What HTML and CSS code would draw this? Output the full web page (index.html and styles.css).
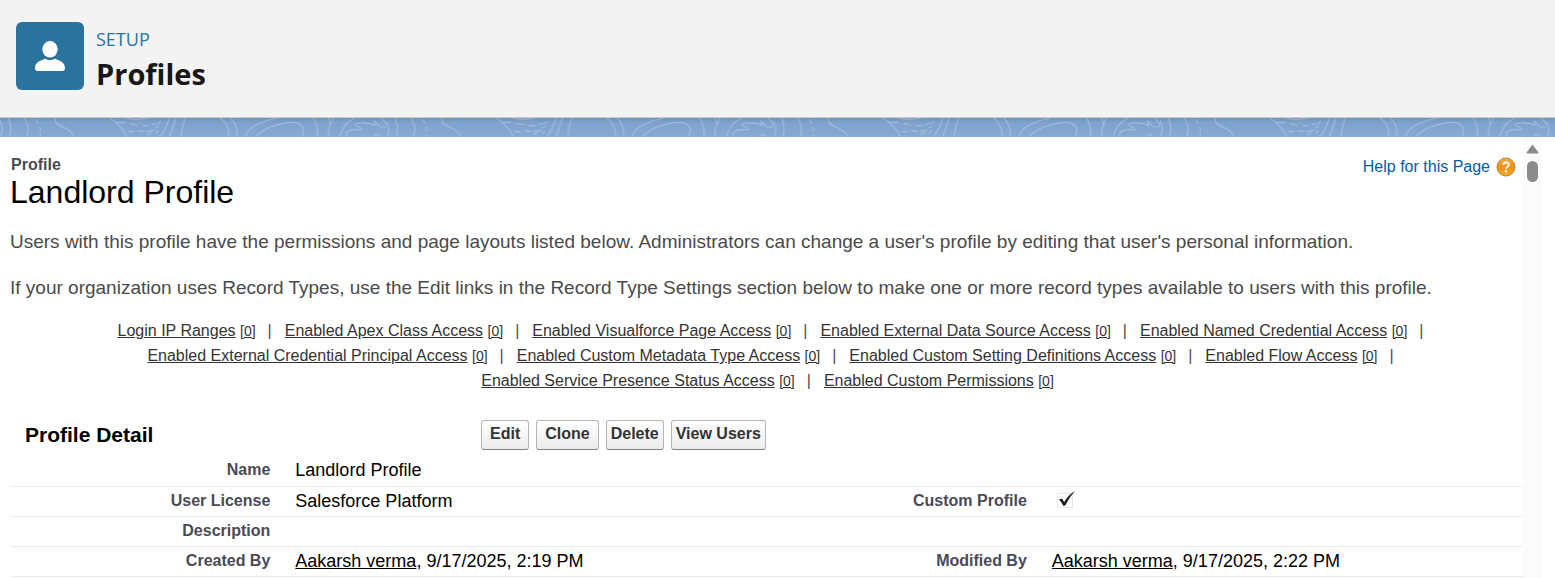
FILE: index.html
```
<!DOCTYPE html>
<html lang="en">
<head>
<meta charset="utf-8">
<title>Profiles</title>
<link rel="stylesheet" href="styles.css">
</head>
<body>
<header class="setup-header">
  <span class="setup-icon">
    <svg width="32" height="32" viewBox="0 0 32 32" aria-hidden="true">
      <ellipse cx="16" cy="9.300" rx="7.700" ry="8.300"/>
      <path d="M10 19.200C11.200 18.200 12 19 12.800 19.400C15 20.300 17 20.300 19.200 19.400C20 19 20.800 18.200 22 19.200C26 20.500 31 22.500 31 28C31 30 30 31 28.500 31H3.500C2 31 1 30 1 28C1 22.500 6 20.500 10 19.200Z"/>
    </svg>
  </span>
  <div class="setup-titles">
    <p class="setup-label">SETUP</p>
    <h1 class="setup-title">Profiles</h1>
  </div>
</header>
<div class="topo">
  <svg class="topo-art" aria-hidden="true">
    <defs>
      <pattern id="contours" width="1160" height="57" patternUnits="userSpaceOnUse" patternTransform="scale(.33333)">
        <g fill="none" stroke="#fff" stroke-opacity=".25" stroke-width="3.500">
          <path d="M0 8Q12 32 2 57M25 0Q38 28 28 57M72 0Q92 28 80 57M166 0V12Q175 22 195 30Q222 45 222 57M330 0Q370 30 382 57M375 0Q410 8 445 0M508 0Q500 30 480 57M528 0Q518 30 508 57M555 0Q545 30 543 57M660 0Q690 20 686 57M692 0Q715 25 710 57"/>
          <path d="M108 5Q126 28 120 57" stroke-dasharray="14 10"/>
          <path d="M350 13H375M390 16L412 21M427 23H447M456 21L468 16M472 18L482 10M385 41H402M414 38L433 41M441 41L462 36M466 30L476 24M440 51L454 43M468 46L474 38"/>
          <path d="M737 57Q740 35 770 20Q800 5 832 0M768 57Q780 40 810 28Q850 12 885 13Q915 20 910 45L905 57M940 0Q955 28 952 57M1000 0Q983 28 985 57M985 0L992 22M1020 57Q1025 20 1065 0"/>
          <path d="M1040 57Q1035 38 1060 35L1085 35L1080 27Q1060 24 1070 16Q1100 12 1127 22L1122 8L1140 27L1160 26M1145 0Q1172 30 1165 57M1124 57Q1121 49 1130 49Q1138 51 1136 57"/>
        </g>
      </pattern>
    </defs>
    <rect width="100%" height="100%" fill="url(#contours)"/>
  </svg>
</div>
<div class="frame">
  <main class="content">
    <div class="page-head">
      <div>
        <p class="page-type">Profile</p>
        <h2 class="page-name">Landlord Profile</h2>
      </div>
      <a class="help" href="#help">Help for this Page
        <svg width="20" height="20" viewBox="0 0 20 20" aria-hidden="true">
          <defs><linearGradient id="amber" x2="0" y2="1"><stop offset="0" stop-color="#f0b04b"/><stop offset=".5" stop-color="#ee910f"/><stop offset="1" stop-color="#f6ac25"/></linearGradient></defs>
          <circle cx="10" cy="10" r="9" fill="url(#amber)" stroke="#b98232" stroke-width="1"/>
          <path d="M7.300 8Q7.300 5.400 10 5.400Q12.700 5.400 12.700 7.700Q12.700 9 11.200 9.900Q10 10.600 10 12" fill="none" stroke="#fff" stroke-width="1.800"/>
          <circle cx="10" cy="14.300" r="1.200" fill="#fff"/>
        </svg>
      </a>
    </div>
    <p class="intro">Users with this profile have the permissions and page layouts listed below. Administrators can change a user's profile by editing that user's personal information.</p>
    <p class="intro">If your organization uses Record Types, use the Edit links in the Record Type Settings section below to make one or more record types available to users with this profile.</p>
    <nav class="jump-links">
      <div class="jump-row">
        <span class="jump"><a href="#ip"><span>Login IP Ranges</span> <small>[0]</small></a></span>
        <span class="jump"><a href="#apex"><span>Enabled Apex Class Access</span> <small>[0]</small></a></span>
        <span class="jump"><a href="#vf"><span>Enabled Visualforce Page Access</span> <small>[0]</small></a></span>
        <span class="jump"><a href="#eds"><span>Enabled External Data Source Access</span> <small>[0]</small></a></span>
        <span class="jump"><a href="#nc"><span>Enabled Named Credential Access</span> <small>[0]</small></a></span>
      </div>
      <div class="jump-row">
        <span class="jump"><a href="#ecp"><span>Enabled External Credential Principal Access</span> <small>[0]</small></a></span>
        <span class="jump"><a href="#cmt"><span>Enabled Custom Metadata Type Access</span> <small>[0]</small></a></span>
        <span class="jump"><a href="#csd"><span>Enabled Custom Setting Definitions Access</span> <small>[0]</small></a></span>
        <span class="jump"><a href="#flow"><span>Enabled Flow Access</span> <small>[0]</small></a></span>
      </div>
      <div class="jump-row">
        <span class="jump"><a href="#presence"><span>Enabled Service Presence Status Access</span> <small>[0]</small></a></span>
        <span class="jump jump-last"><a href="#perms"><span>Enabled Custom Permissions</span> <small>[0]</small></a></span>
      </div>
    </nav>
    <section>
      <div class="detail-head">
        <h3 class="detail-title">Profile Detail</h3>
        <div class="actions">
          <button class="btn btn-wide" type="button">Edit</button>
          <button class="btn btn-wide" type="button">Clone</button>
          <button class="btn" type="button">Delete</button>
          <button class="btn" type="button">View Users</button>
        </div>
      </div>
      <table class="detail">
        <colgroup><col class="col-label"><col class="col-value"><col class="col-label"><col class="col-value"></colgroup>
        <tbody>
          <tr><th scope="row">Name</th><td colspan="3">Landlord Profile</td></tr>
          <tr>
            <th scope="row">User License</th><td>Salesforce Platform</td>
            <th scope="row">Custom Profile</th>
            <td><svg class="check" width="20" height="18" viewBox="0 0 20 18" role="img" aria-label="Checked">
              <rect x="1.500" y="2.500" width="15" height="14" fill="none" stroke="#c8c8c8" stroke-dasharray="1 1"/>
              <path d="M3 8.500L6 7.500L8.200 11Q12 4 19 0Q13.500 6 9.300 14.500L7.300 14.800Q5.500 11 3 8.500Z" fill="#222"/>
            </svg></td>
          </tr>
          <tr><th scope="row">Description</th><td colspan="3"></td></tr>
          <tr>
            <th scope="row">Created By</th><td><a href="#creator">Aakarsh verma</a>, 9/17/2025, 2:19 PM</td>
            <th scope="row">Modified By</th><td><a href="#modifier">Aakarsh verma</a>, 9/17/2025, 2:22 PM</td>
          </tr>
        </tbody>
      </table>
    </section>
  </main>
  <div class="scrollbar" aria-hidden="true">
    <svg width="13" height="10" viewBox="0 0 13 10"><path d="M6.500 .5L12.500 8.500Q12.500 9.500 11.500 9.500H1.500Q.5 9.500 .5 8.500Z" fill="#8b8b8b"/></svg>
    <span class="thumb"></span>
  </div>
</div>
</body>
</html>
```
FILE: styles.css
```
* { box-sizing: border-box; }
html, body { height: 100%; }
body {
  margin: 0;
  display: flex;
  flex-direction: column;
  overflow: hidden;
  background: #fff;
  color: #000;
  font-family: "Liberation Sans", Arial, sans-serif;
}
p, h1, h2, h3 { margin: 0; }

.setup-header {
  flex: none;
  display: flex;
  gap: 12px;
  padding: 22px 16px 20px;
  background: #f3f3f3;
  border-bottom: 1px solid #c9c9c9;
  font-family: "Open Sans", "Noto Sans", sans-serif;
}
.setup-icon {
  display: flex;
  align-items: center;
  justify-content: center;
  width: 68px;
  height: 68px;
  border-radius: 6px;
  background: #2a739e;
}
.setup-icon svg { fill: #fff; }
.setup-titles { padding-top: 5px; }
.setup-label { font-size: 18px; line-height: 24px; color: #2574a9; }
.setup-title { font-size: 29px; line-height: 46px; font-weight: 700; color: #181818; }

.topo {
  flex: none;
  height: 19px;
  background: linear-gradient(#6f94bd, #7fa3cd 5px, #87a9d2);
}
.topo-art { display: block; width: 100%; height: 100%; }

.frame {
  flex: 1;
  min-height: 0;
  display: flex;
  padding-right: 14px;
}
.content {
  flex: 1;
  overflow: hidden;
  padding: 18px 0 0 10px;
}
.scrollbar {
  width: 18px;
  display: flex;
  flex-direction: column;
  align-items: center;
  gap: 7px;
  padding-top: 7px;
  background: #fbfbfb;
}
.thumb { width: 11px; height: 21px; border-radius: 6px; background: #8b8b8b; }

.page-head { display: flex; justify-content: space-between; padding-right: 7px; }
.page-type { padding-left: 1px; font-size: 16px; line-height: 20px; font-weight: 700; color: #4a4a56; }
.page-name { font-size: 32px; line-height: 34px; font-weight: 400; }
.help {
  display: flex;
  align-items: center;
  align-self: flex-start;
  gap: 6px;
  padding-top: 2px;
  font-size: 16px;
  color: #015ba7;
  text-decoration: none;
}
.intro { margin-top: 22px; font-size: 19px; line-height: 24px; color: #4a4a4a; }
.page-head + .intro { margin-top: 21px; }

.jump-links { margin-top: 18px; font-size: 16px; line-height: 25px; color: #4a4a4a; }
.jump-row { display: flex; justify-content: center; gap: 13px; padding-left: 8px; }
.jump-row:last-child { padding-left: 2px; }
.jump a { color: #333; text-decoration: none; }
.jump a span, .jump small { text-decoration: underline; }
.jump small { font-size: 14px; line-height: 1; }
.jump::after { content: "|"; margin-left: 12px; }
.jump-last::after { content: none; }

.detail-head { display: flex; align-items: center; margin-top: 27px; }
.detail-title { width: 31%; padding-left: 15px; font-size: 21px; }
.actions { display: flex; gap: 7px; padding-left: 2px; }
.btn {
  height: 30px;
  padding: 0 4px 2px;
  border: 1px solid #b5b5b5;
  border-bottom-color: #7f7f7f;
  border-radius: 3px;
  background: linear-gradient(#fff, #ececec);
  color: #333;
  font: 700 16px "Liberation Sans", Arial, sans-serif;
}
.btn-wide { padding: 0 8px 2px; }

.detail { width: 100%; margin-top: 6px; table-layout: fixed; border-collapse: collapse; }
.col-label { width: 18%; }
.col-value { width: 32%; }
.detail tr { border-bottom: 1px solid #ececec; }
.detail th, .detail td { height: 30px; padding: 0; line-height: 24px; vertical-align: top; }
.detail th { padding-right: 12px; padding-top: 2px; text-align: right; font-size: 16px; color: #4a4a56; }
.detail td { padding-left: 13px; padding-top: 2px; font-size: 18px; }
.detail a { color: #000; }
.check { display: block; margin: 2px 0 0 4px; }
```
